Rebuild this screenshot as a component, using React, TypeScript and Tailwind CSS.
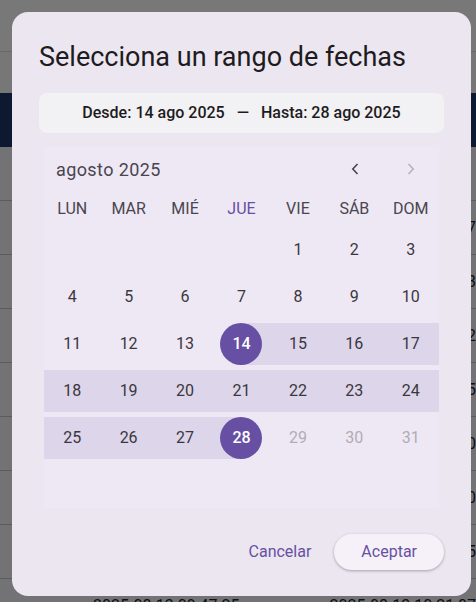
import React from 'react';
import clsx from 'clsx';

const weekdays = ['LUN', 'MAR', 'MIÉ', 'JUE', 'VIE', 'SÁB', 'DOM'];

// agosto 2025 empieza en viernes
const cells: (number | null)[] = [
  null, null, null, null,
  ...Array.from({ length: 31 }, (_, i) => i + 1),
];
while (cells.length < 42) cells.push(null);

const rangeStart = 14;
const rangeEnd = 28;
const lastEnabled = 28;

const rows = [
  ['', ''],
  ['2025-08-13 10:21:07', '2025-08-13 10:21:07'],
  ['2025-08-13 10:18:43', '2025-08-13 10:18:43'],
  ['2025-08-13 10:14:52', '2025-08-13 10:14:52'],
  ['2025-08-13 10:09:15', '2025-08-13 10:09:15'],
  ['2025-08-13 10:04:30', '2025-08-13 10:04:30'],
  ['2025-08-13 09:58:20', '2025-08-13 09:58:20'],
  ['2025-08-13 09:51:05', '2025-08-13 09:51:05'],
  ['2025-08-13 09:47:25', '2025-08-13 10:21:07'],
];

function DayCell({ day }: { day: number | null }) {
  if (day === null) return <div className="h-[47px]" />;
  const isEdge = day === rangeStart || day === rangeEnd;
  const inRange = day > rangeStart && day < rangeEnd;
  const disabled = day > lastEnabled;
  return (
    <div className="flex h-[47px] items-center">
      <div
        className={clsx(
          'flex h-[42px] w-full items-center justify-center',
          inRange && 'bg-[#DDD5E9]',
          day === rangeStart && 'bg-[linear-gradient(to_right,transparent_50%,#DDD5E9_50%)]',
          day === rangeEnd && 'bg-[linear-gradient(to_right,#DDD5E9_50%,transparent_50%)]',
        )}
      >
        <span
          className={clsx(
            'flex h-[42px] w-[42px] items-center justify-center rounded-full text-[16px]',
            isEdge && 'bg-[#6750A4] font-medium text-white',
            !isEdge && !disabled && 'text-[#3A3740]',
            disabled && 'text-[#B1ACB6]',
          )}
        >
          {day}
        </span>
      </div>
    </div>
  );
}

export default function App() {
  return (
    <div className="relative h-[602px] w-[476px] overflow-hidden bg-[#eeeeee] font-['Roboto',sans-serif]">
      {/* Page behind the dialog */}
      <div className="h-[52px] border-b border-[#d2d2d2] bg-[#f0f0f0]" />
      <div className="h-[41px] bg-[#eeeeee]" />
      <div className="flex h-[54px] items-center bg-[#183262] text-[16px] font-bold text-white">
        <span className="w-[358px] pl-[93px]">Fecha de envío</span>
        <span className="whitespace-nowrap">Fecha registro</span>
      </div>
      {rows.map((r, i) => (
        <div
          key={i}
          className="flex h-[54px] items-center whitespace-nowrap border-b border-[#b8b8bf] bg-[#e6e6ea] text-[16px] text-[#202020]"
        >
          <span className="w-[358px] pl-[93px]">{r[0]}</span>
          <span>{r[1]}</span>
        </div>
      ))}

      {/* Scrim */}
      <div className="absolute inset-0 bg-black/50" />

      {/* Dialog */}
      <div className="absolute left-[12px] top-[12px] flex h-[584px] w-[459px] flex-col rounded-[16px] bg-[#ECE6F0] px-[27px] pt-[27px]">
        <h2 className="text-[27px] leading-[36px] text-[#1D1B20]">Selecciona un rango de fechas</h2>

        <div className="mt-[18px] flex h-[40px] items-center justify-center rounded-[8px] bg-[#F2F1F4] text-[16px] font-medium text-[#1D1B20]">
          <span>Desde: 14 ago 2025</span>
          <span className="px-[12px]">—</span>
          <span>Hasta: 28 ago 2025</span>
        </div>

        <div className="mx-[5px] mt-[14px] bg-[#EEE8F4]">
          <div className="flex h-[44px] items-center pl-[12px]">
            <span className="text-[18px] tracking-[0.4px] text-[#49454F]">agosto 2025</span>
            <div className="ml-auto grid w-[112px] grid-cols-2">
              <span className="flex justify-center text-[#49454F]">
                <svg width="8" height="12" viewBox="0 0 8 12" fill="none">
                  <path d="M6.5 1 1.8 6l4.7 5" stroke="currentColor" strokeWidth="1.6" />
                </svg>
              </span>
              <span className="flex justify-center text-[#B5B0BA]">
                <svg width="8" height="12" viewBox="0 0 8 12" fill="none">
                  <path d="M1.5 1l4.7 5-4.7 5" stroke="currentColor" strokeWidth="1.6" />
                </svg>
              </span>
            </div>
          </div>

          <div className="grid h-[35px] grid-cols-7 items-center text-center text-[16px]">
            {weekdays.map((w) => (
              <span key={w} className={w === 'JUE' ? 'text-[#6750A4]' : 'text-[#49454F]'}>
                {w}
              </span>
            ))}
          </div>

          <div className="grid grid-cols-7">
            {cells.map((d, i) => (
              <DayCell key={i} day={d} />
            ))}
          </div>
        </div>

        <div className="mt-auto flex items-center justify-end gap-[11px] pb-[26px]">
          <button className="h-[36px] px-[12px] text-[16px] text-[#6750A4]">Cancelar</button>
          <button className="h-[36px] rounded-full bg-[#F6F1F9] px-[27px] text-[16px] text-[#6750A4] shadow-[0_1px_3px_rgba(0,0,0,0.3)]">
            Aceptar
          </button>
        </div>
      </div>
    </div>
  );
}
